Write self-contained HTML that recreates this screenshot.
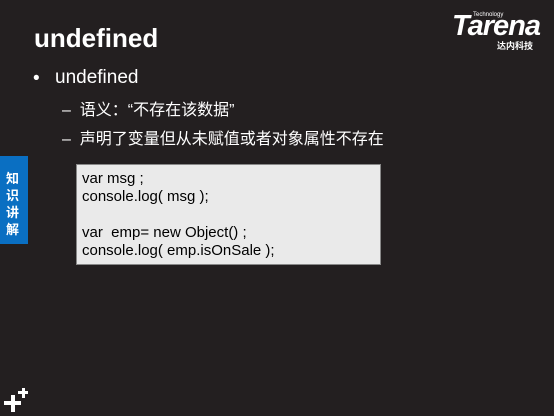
<!DOCTYPE html>
<html><head><meta charset="utf-8"><style>
body{margin:0;width:554px;height:416px;background:#231f20;position:relative;overflow:hidden;font-family:"Liberation Sans","Noto Sans CJK SC",sans-serif;color:#fff}
.a{position:absolute;white-space:nowrap}
</style></head><body>
<div class="a" style="left:34px;top:23px;font-size:26px;font-weight:bold">undefined</div>
<div class="a" style="left:33px;top:68px;font-size:19px">•</div>
<div class="a" style="left:55px;top:67px;font-size:19px">undefined</div>
<div class="a" style="left:62px;top:96px;font-size:16px">–&nbsp;&nbsp;语义：“不存在该数据”</div>
<div class="a" style="left:62px;top:125px;font-size:16px">–&nbsp;&nbsp;声明了变量但从未赋值或者对象属性不存在</div>
<div class="a" style="left:76px;top:164px;width:303px;height:99px;background:#eaeaea;border:1px solid #888"></div>
<div class="a" style="left:82px;top:170px;font-size:15px;line-height:18px;color:#000">var msg ;<br>console.log( msg );<br><br>var&nbsp;&nbsp;emp= new Object() ;<br>console.log( emp.isOnSale );</div>
<div class="a" style="left:0;top:156px;width:28px;height:88px;background:#0a6fc2"></div>
<div class="a" style="left:6px;top:170px;width:16px;font-size:13px;font-weight:bold;line-height:17px;white-space:normal">知识讲解</div>
<div class="a" style="left:452px;top:10px;font-size:29px;font-weight:bold;font-style:italic;letter-spacing:-1px">Tarena</div>
<div class="a" style="left:473px;top:12px;font-size:6px">Technology</div>
<div class="a" style="left:497px;top:39px;font-size:9px;font-weight:bold">达内科技</div>
<div class="a" style="left:4px;top:401px;width:17px;height:4px;background:#fff"></div>
<div class="a" style="left:10.5px;top:395px;width:4px;height:17px;background:#fff"></div>
<div class="a" style="left:18px;top:391px;width:10px;height:3px;background:#fff"></div>
<div class="a" style="left:21.5px;top:388px;width:3px;height:10px;background:#fff"></div>
</body></html>
